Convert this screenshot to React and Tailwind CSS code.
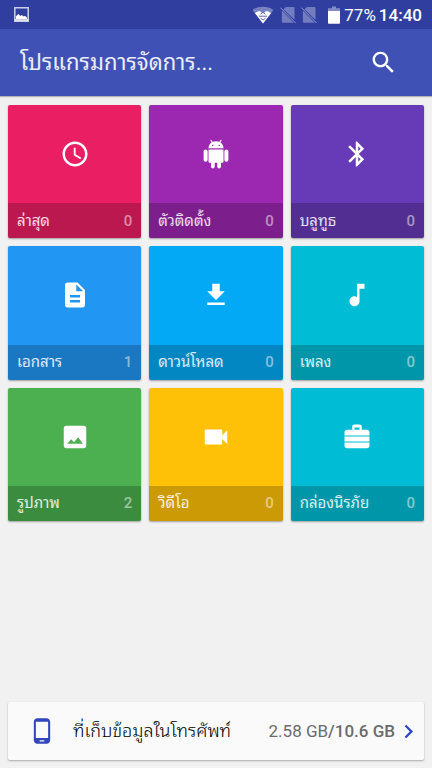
const APP_FONT = "font-['Roboto','Noto_Sans_Thai_Looped',sans-serif]";

const categories = [
  {
    id: 'recent',
    label: 'ล่าสุด',
    count: 0,
    color: 'bg-[#e91e63]',
    icon: 'M11.99 2C6.47 2 2 6.48 2 12s4.47 10 9.99 10C17.52 22 22 17.52 22 12S17.52 2 11.99 2zM12 20c-4.42 0-8-3.58-8-8s3.58-8 8-8 8 3.58 8 8-3.58 8-8 8zm.5-13H11v6l5.25 3.15.75-1.23-4.5-2.67z',
  },
  {
    id: 'installers',
    label: 'ตัวติดตั้ง',
    count: 0,
    color: 'bg-[#9c27b0]',
    icon: 'M6 18c0 .55.45 1 1 1h1v3c0 .83.67 1.5 1.5 1.5s1.5-.67 1.5-1.5V19h2v3c0 .83.67 1.5 1.5 1.5s1.5-.67 1.5-1.5V19h1c.55 0 1-.45 1-1V8.3H6V18zM3.7 8.3C2.8 8.3 2.1 9 2.1 9.9v6.7c0 .9.7 1.6 1.6 1.6s1.6-.7 1.6-1.6V9.9c0-.9-.7-1.6-1.6-1.6zm16.6 0c-.9 0-1.6.7-1.6 1.6v6.7c0 .9.7 1.6 1.6 1.6s1.6-.7 1.6-1.6V9.9c0-.9-.7-1.6-1.6-1.6zM15.5 2.5l1-1.4c.2-.5-.4-.8-.7-.4L14.7 2.2C13.85 1.83 12.95 1.7 12 1.7s-1.86.13-2.7.5L8.2.7c-.3-.4-.9-.1-.7.4l1 1.4C6.97 3.6 6 5.3 6 7.4h12c0-2.1-.97-3.8-2.5-4.9zM9.9 5.6H8.9v-1h1v1zm5.2 0h-1v-1h1v1z',
  },
  {
    id: 'bluetooth',
    label: 'บลูทูธ',
    count: 0,
    color: 'bg-[#673ab7]',
    icon: 'M17.71 7.71L12 2h-1v7.59L6.41 5 5 6.41 10.59 12 5 17.59 6.41 19 11 14.41V22h1l5.71-5.71-4.3-4.29 4.3-4.29zM13 5.83l1.88 1.88L13 9.59V5.83zm1.88 10.46L13 18.17v-3.76l1.88 1.88z',
  },
  {
    id: 'documents',
    label: 'เอกสาร',
    count: 1,
    color: 'bg-[#2196f3]',
    icon: 'M14 2H6c-1.1 0-1.99.9-1.99 2L4 20c0 1.1.89 2 1.99 2H18c1.1 0 2-.9 2-2V8l-6-6zm2 16H8v-2h8v2zm0-4H8v-2h8v2zm-3-5V3.5L18.5 9H13z',
  },
  {
    id: 'downloads',
    label: 'ดาวน์โหลด',
    count: 0,
    color: 'bg-[#03a9f4]',
    icon: 'M19 9h-4V3H9v6H5l7 7 7-7zM5 18v2h14v-2H5z',
  },
  {
    id: 'music',
    label: 'เพลง',
    count: 0,
    color: 'bg-[#00bcd4]',
    icon: 'M12 3v10.55c-.59-.34-1.27-.55-2-.55-2.21 0-4 1.79-4 4s1.79 4 4 4 4-1.79 4-4V7h4V3h-6z',
  },
  {
    id: 'pictures',
    label: 'รูปภาพ',
    count: 2,
    color: 'bg-[#4caf50]',
    icon: 'M21 19V5c0-1.1-.9-2-2-2H5c-1.1 0-2 .9-2 2v14c0 1.1.9 2 2 2h14c1.1 0 2-.9 2-2zM8.9 13.7l2.3 2.4 3.3-3.9 3.8 5.2H5.8z',
  },
  {
    id: 'video',
    label: 'วิดีโอ',
    count: 0,
    color: 'bg-[#ffc107]',
    icon: 'M17 10.5V7c0-.55-.45-1-1-1H4c-.55 0-1 .45-1 1v10c0 .55.45 1 1 1h12c.55 0 1-.45 1-1v-3.5l4 4v-11l-4 4z',
  },
  {
    id: 'safe',
    label: 'กล่องนิรภัย',
    count: 0,
    color: 'bg-[#00bcd4]',
    icon: 'M8.2 6.2V3.6c0-.9.7-1.6 1.6-1.6h4.4c.9 0 1.6.7 1.6 1.6v2.6H20c1.1 0 2 .9 2 2v2.6H2V8.2c0-1.1.9-2 2-2zM10 4.3v1.9h4V4.3zM2 11.5h20v4.1H2zM2 16.3h20V19c0 1.1-.9 2-2 2H4c-1.1 0-2-.9-2-2z',
  },
];

function Icon({ path, size, className }) {
  return (
    <svg viewBox="0 0 24 24" width={size} height={size} fill="currentColor" fillRule="evenodd" className={className} aria-hidden="true">
      <path d={path} />
    </svg>
  );
}

function NoSim() {
  return (
    <svg viewBox="0 0 16 18" width="16" height="18" aria-hidden="true">
      <g fill="#fff" fillOpacity=".32">
        <path d="M6 1h7.2c.8 0 1.3.5 1.3 1.3v11.5L3.4 3.2z" />
        <path d="M1.9 4.6l11.8 12.1c-.2.1-.4.1-.6.1H3.2c-.8 0-1.3-.5-1.3-1.3z" />
      </g>
      <path stroke="#8e96cf" strokeWidth="1" d="M.5 1.7l15 15.3" />
    </svg>
  );
}

function StatusBar() {
  return (
    <div className="flex h-[29px] items-center justify-between bg-[#303f9f] pl-[14px] pr-[10px] text-white">
      <svg viewBox="0 0 15 15" width="15" height="15" aria-hidden="true">
        <path fill="none" stroke="#fff" strokeOpacity=".75" strokeWidth="1.5" d="M.8.8h13.4v13.4H.8z" />
        <path fill="#fff" d="M2 12V9.2L4.3 7l2.2 2 1.3-1 2 1.5 1.2-.7 2 2V12z" />
        <path fill="#fff" fillOpacity=".75" d="M1 12h13v2H1z" />
      </svg>
      <div className="flex items-center">
        <svg viewBox="0 0 22 18" width="22" height="18" className="mr-1.5" aria-hidden="true">
          <path fill="#fff" fillOpacity=".35" d="M.5 4C6.5-.3 15.5-.3 21.5 4L11 17.5z" />
          <path fill="#fff" d="M2.8 7C4.8 5.9 6.8 5.3 8 5.1L9.3 6.5h3.4L14 5.1c1.2.2 3.2.8 5.2 1.9L11 17.5z" />
          <path fill="none" stroke="#303f9f" strokeWidth=".8" d="M7 10.2h8M8.5 8.2L11 6.3l2.5 1.9M8.5 12.2L11 14l2.5-1.8" />
        </svg>
        <div className="flex gap-[5px]">
          <NoSim />
          <NoSim />
        </div>
        <svg viewBox="0 0 12 18" width="12" height="18" className="ml-[11px] mr-1" aria-hidden="true">
          <path fill="#fff" fillOpacity=".4" d="M4 .5h4v1.7h4V5H0V2.2h4z" />
          <path fill="#fff" d="M0 5h12v12c0 .5-.3.8-.8.8H.8C.3 17.8 0 17.5 0 17z" />
        </svg>
        <span className="mr-[3px] text-[17px] leading-5">77%</span>
        <span className="text-[17px] font-medium leading-5">14:40</span>
      </div>
    </div>
  );
}

function CategoryTile({ category }) {
  return (
    <button
      type="button"
      className={`flex aspect-square flex-col overflow-hidden rounded-xs text-white shadow-[0_1px_2px_rgba(0,0,0,0.35)] ${category.color}`}
    >
      <span className="flex w-full flex-1 items-center justify-center">
        <Icon path={category.icon} size={30} />
      </span>
      <span className="flex h-[35px] w-full items-center justify-between bg-black/20 px-[9px]">
        <span className="whitespace-nowrap text-[15px] leading-5 text-white/85">{category.label}</span>
        <span className="text-[15px] font-medium leading-5 text-white/50">{category.count}</span>
      </span>
    </button>
  );
}

export default function App() {
  return (
    <div className={`flex min-h-screen flex-col bg-[#f1f1f1] ${APP_FONT}`}>
      <StatusBar />
      <header className="flex h-[67px] items-center justify-between bg-[#3f51b5] pl-5 pr-[34px] text-white shadow-[0_1px_1px_rgba(0,0,0,0.25)]">
        <h1 className="whitespace-nowrap text-[22px] leading-8 text-white/90">โปรแกรมการจัดการ...</h1>
        <button type="button" aria-label="ค้นหา">
          <Icon
            size={29}
            path="M15.5 14h-.79l-.28-.27C15.41 12.59 16 11.11 16 9.5 16 5.91 13.09 3 9.5 3S3 5.91 3 9.5 5.91 16 9.5 16c1.61 0 3.09-.59 4.23-1.57l.27.28v.79l5 4.99L20.49 19l-4.99-5zm-6 0C7.01 14 5 11.99 5 9.5S7.01 5 9.5 5 14 7.01 14 9.5 11.99 14 9.5 14z"
          />
        </button>
      </header>

      <main className="flex flex-1 flex-col justify-between px-2 pb-2 pt-[9px]">
        <div className="grid grid-cols-3 gap-2">
          {categories.map(category => (
            <CategoryTile key={category.id} category={category} />
          ))}
        </div>

        <button
          type="button"
          className="flex h-[58px] w-full items-center rounded-xs bg-[#fafafa] pl-5 pr-0.5 text-left shadow-[0_1px_2px_rgba(0,0,0,0.3)]"
        >
          <Icon
            size={28}
            className="mr-[17px] text-[#3146bd]"
            path="M16 1H8C6.34 1 5 2.34 5 4v16c0 1.66 1.34 3 3 3h8c1.66 0 3-1.34 3-3V4c0-1.66-1.34-3-3-3zm-2 20h-4v-1h4v1zm3.25-3H6.75V4h10.5v14z"
          />
          <span className="flex-1 whitespace-nowrap text-[18px] font-light leading-6 text-black">ที่เก็บข้อมูลในโทรศัพท์</span>
          <span className="whitespace-nowrap text-[17px] leading-6 text-[#6b6b6b]">
            2.58 GB<span className="font-medium">/10.6 GB</span>
          </span>
          <Icon size={27} className="text-[#2b44c4]" path="M10 6L8.59 7.41 13.17 12l-4.58 4.59L10 18l6-6z" />
        </button>
      </main>
    </div>
  );
}
